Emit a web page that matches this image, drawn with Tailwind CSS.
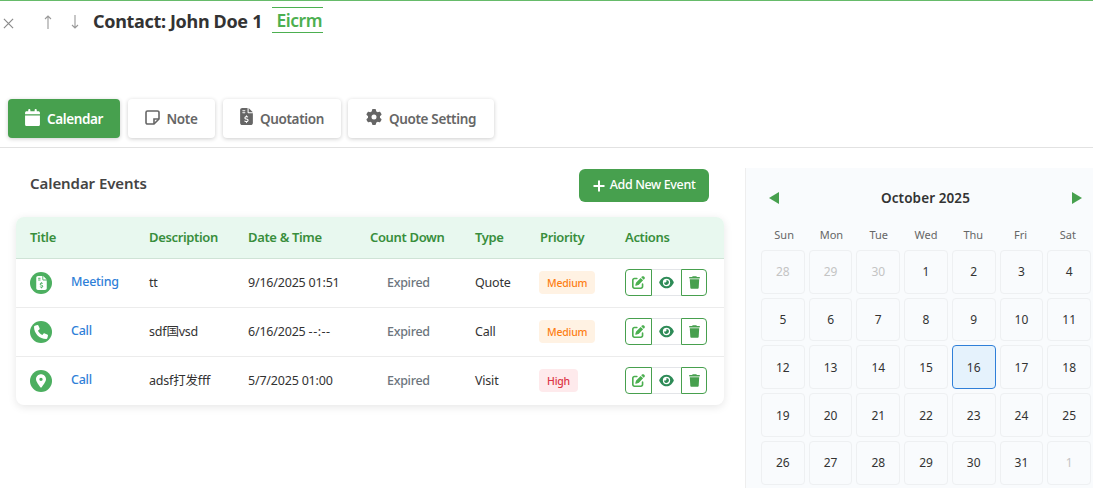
<!DOCTYPE html>
<html lang="en">
<head>
  <meta charset="UTF-8">
  <title>Contact: John Doe 1</title>
  <script src="https://cdn.jsdelivr.net/npm/@tailwindcss/browser@4"></script>
</head>
<body class="h-[488px] overflow-hidden bg-white font-['Noto_Sans','Noto_Sans_CJK_SC',sans-serif] text-[#333] border-t border-[#66bb6a]">
  <!-- Header -->
  <header class="h-[98px] flex items-start">
    <span class="w-[16px] h-[14px] mt-[17px] flex justify-center text-[#8a8a8a]">
      <svg class="w-[11px] h-[11px]" viewBox="0 0 12 12" fill="none" stroke="currentColor" stroke-width="1.3"><path d="M1 1l10 10M11 1L1 11"/></svg>
    </span>
    <span class="ml-[26px] mt-[14px] text-[#999]">
      <svg class="w-[12px] h-[14px]" viewBox="0 0 12 14" fill="none" stroke="currentColor" stroke-width="1.1"><path d="M6 14V1M3 4l3-3 3 3"/></svg>
    </span>
    <span class="ml-[15px] mt-[14px] text-[#999]">
      <svg class="w-[12px] h-[14px]" viewBox="0 0 12 14" fill="none" stroke="currentColor" stroke-width="1.1"><path d="M6 0v13M3 10l3 3 3-3"/></svg>
    </span>
    <h1 class="ml-[12px] mt-[8px] w-[169px] whitespace-nowrap text-[18px] leading-[24px] font-bold tracking-[-0.33px] text-[#333]">Contact: John Doe 1</h1>
    <span class="ml-[10px] mt-[6px] h-[26px] w-[51px] border-y border-[#4caf50] text-right pr-[1px] text-[17.5px] leading-[25px] font-semibold tracking-[-0.5px] text-[#4caf50]">Eicrm</span>
  </header>

  <!-- Tabs -->
  <nav class="h-[49px] border-b border-[#e2e2e2] pl-[8px] flex items-start text-[13.5px] font-semibold tracking-[-0.35px] text-[#666]">
    <button class="w-[112px] h-[39px] rounded bg-[#47a04e] text-white shadow-[0_1px_4px_rgba(0,0,0,0.2)] flex items-center justify-center gap-[7px]">
      <svg class="w-[15px] h-[17px] -mt-[3px]" viewBox="0 0 448 512" fill="currentColor"><path d="M96 32V64H48C21.5 64 0 85.5 0 112v48H448V112c0-26.5-21.5-48-48-48H352V32c0-17.7-14.3-32-32-32s-32 14.3-32 32V64H160V32c0-17.7-14.3-32-32-32S96 14.3 96 32zM448 192H0V464c0 26.5 21.5 48 48 48H400c26.500 0 48-21.5 48-48V192z"/></svg>
      <span class="mt-[2px]">Calendar</span>
    </button>
    <button class="ml-[8px] w-[87px] h-[39px] rounded bg-white shadow-[0_1px_4px_rgba(0,0,0,0.2)] flex items-center justify-center gap-[6px]">
      <svg class="w-[15px] h-[15px] -mt-[3px]" viewBox="0 0 15 15" fill="none" stroke="currentColor" stroke-width="1.6"><path d="M2.5 1h10A1.500 1.500 0 0 1 14 2.500V9l-5 5H2.500A1.500 1.500 0 0 1 1 12.500v-10A1.500 1.500 0 0 1 2.500 1z"/><path d="M14 9H9v5"/></svg>
      <span class="mt-[2px]">Note</span>
    </button>
    <button class="ml-[8px] w-[118px] h-[39px] rounded bg-white shadow-[0_1px_4px_rgba(0,0,0,0.2)] flex items-center justify-center gap-[7px]">
      <svg class="w-[13px] h-[17px] -mt-[4px]" viewBox="0 0 384 512" fill="currentColor"><use href="#file-dollar"/></svg>
      <span class="mt-[2px]">Quotation</span>
    </button>
    <button class="ml-[7px] w-[146px] h-[39px] rounded bg-white shadow-[0_1px_4px_rgba(0,0,0,0.2)] flex items-center justify-center gap-[7px]">
      <svg class="w-[16px] h-[16px] -mt-[3px]" viewBox="0 0 512 512" fill="currentColor"><path d="M495.9 166.6c3.2 8.7 .5 18.4-6.4 24.6l-43.3 39.4c1.1 8.3 1.7 16.8 1.7 25.4s-.6 17.1-1.7 25.4l43.3 39.4c6.9 6.2 9.6 15.9 6.4 24.6c-4.4 11.9-9.7 23.3-15.8 34.3l-4.7 8.1c-6.6 11-14 21.4-22.1 31.2c-5.9 7.2-15.7 9.6-24.5 6.8l-55.7-17.7c-13.4 10.3-28.2 18.9-44 25.4l-12.5 57.1c-2 9.1-9 16.3-18.2 17.8c-13.8 2.3-28 3.5-42.5 3.5s-28.7-1.2-42.5-3.5c-9.2-1.5-16.2-8.7-18.2-17.8l-12.5-57.1c-15.8-6.5-30.6-15.1-44-25.4L83.1 425.9c-8.8 2.8-18.6 .3-24.5-6.8c-8.1-9.8-15.5-20.2-22.1-31.2l-4.7-8.1c-6.1-11-11.4-22.4-15.8-34.3c-3.2-8.7-.5-18.4 6.4-24.6l43.3-39.4C64.6 273.1 64 264.6 64 256s.6-17.1 1.7-25.4L22.4 191.2c-6.9-6.2-9.6-15.9-6.4-24.6c4.4-11.9 9.7-23.3 15.8-34.3l4.7-8.1c6.6-11 14-21.4 22.1-31.2c5.9-7.2 15.7-9.6 24.5-6.8l55.7 17.7c13.4-10.3 28.2-18.9 44-25.4l12.5-57.1c2-9.1 9-16.3 18.2-17.8C227.3 1.2 241.5 0 256 0s28.7 1.2 42.5 3.5c9.2 1.5 16.2 8.7 18.2 17.8l12.5 57.1c15.8 6.5 30.6 15.1 44 25.4l55.7-17.7c8.8-2.8 18.6-.3 24.5 6.8c8.1 9.8 15.5 20.2 22.1 31.2l4.7 8.1c6.1 11 11.4 22.4 15.8 34.3zM256 336a80 80 0 1 0 0-160 80 80 0 1 0 0 160z"/></svg>
      <span class="mt-[2px]">Quote Setting</span>
    </button>
  </nav>

  <!-- Shared icons -->
  <svg class="hidden">
    <defs>
      <path id="file-dollar" d="M64 0C28.7 0 0 28.7 0 64V448c0 35.3 28.7 64 64 64H320c35.3 0 64-28.7 64-64V160H256c-17.7 0-32-14.3-32-32V0H64zM256 0V128H384L256 0zM64 80c0-8.8 7.2-16 16-16h64c8.8 0 16 7.2 16 16s-7.2 16-16 16H80c-8.8 0-16-7.2-16-16zm0 64c0-8.8 7.2-16 16-16h64c8.8 0 16 7.2 16 16s-7.2 16-16 16H80c-8.8 0-16-7.2-16-16zm128 72c8.8 0 16 7.2 16 16v17.3c8.5 1.2 16.7 3.1 24.1 5.1c8.5 2.3 13.6 11 11.3 19.6s-11 13.6-19.6 11.3c-11.1-3-22-5.2-32.1-5.3c-8.4-.1-17.4 1.8-23.6 5.5c-5.7 3.4-8.1 7.3-8.1 12.8c0 3.7 1.3 6.5 7.3 10.1c6.9 4.1 16.6 7.1 29.2 10.9l.5 .1c11.3 3.4 25.3 7.6 36.3 14.6c12.1 7.6 22.4 19.7 22.7 38.2c.3 19.3-9.6 33.3-22.9 41.6c-7.7 4.8-16.4 7.6-25.1 9.1V440c0 8.8-7.2 16-16 16s-16-7.2-16-16V422.2c-11.2-2.1-21.7-5.7-30.9-8.9c-2.1-.7-4.2-1.4-6.2-2.1c-8.4-2.8-12.9-11.9-10.1-20.2s11.9-12.9 20.2-10.1c2.5 .8 4.8 1.6 7.1 2.4c13.6 4.6 24.6 8.4 36.3 8.7c9.1 .3 17.9-1.7 23.7-5.3c5.1-3.2 7.9-7.3 7.8-14c-.1-4.6-1.8-7.8-7.7-11.6c-6.8-4.3-16.5-7.4-29-11.2l-1.6-.5c-11-3.3-24.3-7.3-34.8-13.7c-12-7.2-22.6-18.9-22.7-37.3c-.1-19.4 10.8-32.8 23.8-40.5c7.5-4.4 15.8-7.2 24.1-8.7V232c0-8.8 7.2-16 16-16z"/>
    </defs>
  </svg>

  <div class="flex">
    <!-- Events -->
    <main class="w-[745px] pl-[16px] pr-[21px] pt-[21px]">
      <div class="flex justify-between h-[48px] pl-[14px] pr-[15px]">
        <h2 class="text-[15px] leading-[29px] font-semibold tracking-[-0.07px] text-[#444]">Calendar Events</h2>
        <button class="w-[130px] h-[33px] rounded-md bg-[#47a04e] text-white text-[12.5px] tracking-[-0.35px] font-medium flex items-center justify-center gap-[5px]">
          <svg class="w-[12px] h-[12px]" viewBox="0 0 12 12" fill="none" stroke="currentColor" stroke-width="2"><path d="M6 .5v11M.5 6h11"/></svg>
          Add New Event
        </button>
      </div>
      <div class="rounded-lg shadow-[0_2px_8px_rgba(0,0,0,0.1)] overflow-hidden">
        <table class="w-[708px] table-fixed border-collapse text-[12.5px] tracking-[-0.2px]">
          <colgroup>
            <col class="w-[119px]"><col class="w-[100px]"><col class="w-[122px]"><col class="w-[104px]"><col class="w-[66px]"><col class="w-[85px]"><col class="w-[112px]">
          </colgroup>
          <thead>
            <tr class="h-[41px] bg-[#e8f8ef] border-b border-[#cfe3d6] text-left text-[13px] tracking-[-0.35px] text-[#388e3c]">
              <th class="pl-[14px] font-semibold">Title</th>
              <th class="pl-[14px] font-semibold">Description</th>
              <th class="pl-[13px] font-semibold">Date &amp; Time</th>
              <th class="pl-[13px] font-semibold">Count Down</th>
              <th class="pl-[14px] font-semibold">Type</th>
              <th class="pl-[13px] font-semibold">Priority</th>
              <th class="pl-[13px] font-semibold">Actions</th>
            </tr>
          </thead>
          <tbody id="rows" class="text-[#333]"></tbody>
        </table>
      </div>
    </main>

    <!-- Calendar -->
    <aside class="w-[348px] h-[340px] mt-[20px] border-l border-[#eeeeee] bg-[#f9fbfd] pl-[15px] pr-[2px]">
      <div class="h-[59px] pt-[1px] flex items-center justify-between pl-[8px] pr-[9px]">
        <svg class="w-[10px] h-[12px]" viewBox="0 0 10 12" fill="#47a04e"><path d="M10 0v12L0 6z"/></svg>
        <span class="text-[13.5px] font-semibold text-[#333] tracking-[0.1px]">October 2025</span>
        <svg class="w-[10px] h-[12px]" viewBox="0 0 10 12" fill="#47a04e"><path d="M0 0v12l10-6z"/></svg>
      </div>
      <div class="h-[16px] mb-[7px] px-[1.5px] grid grid-cols-7 gap-x-[4px] items-center text-center text-[11px] text-[#666]">
        <span>Sun</span><span>Mon</span><span>Tue</span><span>Wed</span><span>Thu</span><span>Fri</span><span>Sat</span>
      </div>
      <div id="days" class="grid grid-cols-7 gap-[4px] text-[12px] text-[#333]"></div>
    </aside>
  </div>

  <script>
    const EDIT = 'M471.6 21.7c-21.9-21.9-57.3-21.9-79.2 0L362.3 51.7l97.9 97.9 30.1-30.1c21.9-21.9 21.9-57.3 0-79.2L471.6 21.7zm-299.2 220c-6.1 6.1-10.8 13.6-13.5 21.9l-29.6 88.8c-2.9 8.6-.6 18.1 5.8 24.6s15.9 8.7 24.6 5.8l88.8-29.6c8.2-2.7 15.7-7.4 21.9-13.5L437.7 172.3 339.7 74.3 172.4 241.7zM96 64C43 64 0 107 0 160V416c0 53 43 96 96 96H352c53 0 96-43 96-96V320c0-17.7-14.3-32-32-32s-32 14.3-32 32v96c0 17.7-14.3 32-32 32H96c-17.7 0-32-14.3-32-32V160c0-17.7 14.3-32 32-32h96c17.7 0 32-14.3 32-32s-14.3-32-32-32H96z';
    const EYE = 'M288 32c-80.8 0-145.5 36.8-192.6 80.6C48.6 156 17.3 208 2.5 243.7c-3.3 7.9-3.3 16.7 0 24.6C17.3 304 48.6 356 95.4 399.4C142.5 443.2 207.2 480 288 480s145.5-36.8 192.6-80.6c46.8-43.5 78.1-95.4 93-131.1c3.3-7.9 3.3-16.7 0-24.6c-14.9-35.7-46.2-87.7-93-131.1C433.5 68.8 368.8 32 288 32zM144 256a144 144 0 1 1 288 0 144 144 0 1 1 -288 0zm144-64c0 35.3-28.7 64-64 64c-7.1 0-13.9-1.2-20.3-3.3c-5.5-1.8-11.9 1.6-11.7 7.4c.3 6.9 1.3 13.8 3.2 20.7c13.7 51.2 66.4 81.6 117.6 67.9s81.6-66.4 67.9-117.6c-11.1-41.5-47.8-69.4-88.6-71.1c-5.8-.2-9.2 6.1-7.4 11.7c2.1 6.4 3.3 13.2 3.3 20.3z';
    const TRASH = 'M135.2 17.7L128 32H32C14.3 32 0 46.3 0 64S14.3 96 32 96H416c17.7 0 32-14.3 32-32s-14.3-32-32-32H320l-7.2-14.3C307.4 6.8 296.3 0 284.2 0H163.8c-12.1 0-23.2 6.8-28.6 17.7zM416 128H32L53.2 467c1.6 25.3 22.6 45 47.9 45H346.9c25.3 0 46.3-19.7 47.9-45L416 128z';
    const PHONE = 'M164.9 24.6c-7.7-18.6-28-28.5-47.4-23.2l-88 24C12.1 30.2 0 46 0 64C0 311.4 200.6 512 448 512c18 0 33.8-12.1 38.6-29.5l24-88c5.3-19.4-4.6-39.7-23.2-47.4l-96-40c-16.3-6.8-35.2-2.1-46.3 11.6L304.7 368C234.3 334.7 177.3 277.7 144 207.3L193.3 167c13.7-11.2 18.4-30 11.6-46.3l-40-96z';
    const PIN = 'M215.7 499.2C267 435 384 279.4 384 192C384 86 298 0 192 0S0 86 0 192c0 87.4 117 243 168.3 307.2c12.3 15.3 35.1 15.3 47.4 0zM192 256a64 64 0 1 1 0-128 64 64 0 1 1 0 128z';

    const BADGE = {
      Medium: 'bg-[#fff2e3] text-[#fd7e14]',
      High: 'bg-[#feeaec] text-[#dc3545]'
    };

    const events = [
      { icon: '<svg class="w-[11px] h-[14px]" viewBox="0 0 384 512" fill="currentColor"><use href="#file-dollar"/></svg>', title: 'Meeting', desc: 'tt', date: '9/16/2025 01:51', type: 'Quote', priority: 'Medium' },
      { icon: `<svg class="w-[14px] h-[14px]" viewBox="0 0 512 512" fill="currentColor"><path d="${PHONE}"/></svg>`, title: 'Call', desc: 'sdf国vsd', date: '6/16/2025 <span class="tracking-[0.5px]">--:--</span>', type: 'Call', priority: 'Medium' },
      { icon: `<svg class="w-[10px] h-[14px]" viewBox="0 0 384 512" fill="currentColor"><path d="${PIN}"/></svg>`, title: 'Call', desc: 'adsf打发fff', date: '5/7/2025 01:00', type: 'Visit', priority: 'High' }
    ];

    document.getElementById('rows').innerHTML = events.map((e, i) => `
      <tr class="h-[49px] ${i < 2 ? 'border-b border-[#ececec]' : ''}">
        <td class="pl-[14px]">
          <div class="flex items-center">
            <span class="w-[22px] h-[22px] rounded-full bg-[#4caf60] flex items-center justify-center text-white">${e.icon}</span>
            <span class="ml-[19px] text-[#2f7fd8] font-medium tracking-[-0.25px]">${e.title}</span>
          </div>
        </td>
        <td class="pl-[14px] pt-[2px]">${e.desc}</td>
        <td class="pl-[13px] pt-[2px]">${e.date}</td>
        <td class="pl-[30px] pt-[2px] text-[#6c757d] font-medium tracking-[-0.3px]">Expired</td>
        <td class="pl-[14px] pt-[2px]">${e.type}</td>
        <td class="pl-[12px]">
          <span class="inline-block h-[23px] px-[8px] rounded text-[10.5px] leading-[24px] font-medium tracking-[-0.2px] ${BADGE[e.priority]}">${e.priority}</span>
        </td>
        <td class="pl-[13px]">
          <div class="flex w-[82px] h-[27px]">
            <span class="w-[27px] border border-[#47a04e] rounded-l flex items-center justify-center text-[#4caf50]">
              <svg class="w-[13px] h-[13px]" viewBox="0 0 512 512" fill="currentColor"><path d="${EDIT}"/></svg>
            </span>
            <span class="w-[29px] border-y border-[#e3e5e8] flex items-center justify-center text-[#2e8b57]">
              <svg class="w-[15px] h-[13px]" viewBox="0 0 576 512" fill="currentColor"><path d="${EYE}"/></svg>
            </span>
            <span class="w-[26px] border border-[#47a04e] rounded-r flex items-center justify-center text-[#47a04e]">
              <svg class="w-[11px] h-[13px]" viewBox="0 0 448 512" fill="currentColor"><path d="${TRASH}"/></svg>
            </span>
          </div>
        </td>
      </tr>`).join('');

    // Oct 2025 grid, with the trailing/leading days greyed out
    const days = [[28, 1], [29, 1], [30, 1]];
    for (let d = 1; d <= 31; d++) days.push([d, 0]);
    days.push([1, 1]);
    document.getElementById('days').innerHTML = days.map(([d, muted]) => {
      const today = d === 16;
      return `<span class="aspect-square pt-[1px] flex items-center justify-center rounded border ${today ? 'border-[#2f7fd8] bg-[#e5f2fc]' : 'border-[#eef0f2]'} ${muted ? 'text-[#c4c4c4]' : ''}">${d}</span>`;
    }).join('');
  </script>
</body>
</html>
